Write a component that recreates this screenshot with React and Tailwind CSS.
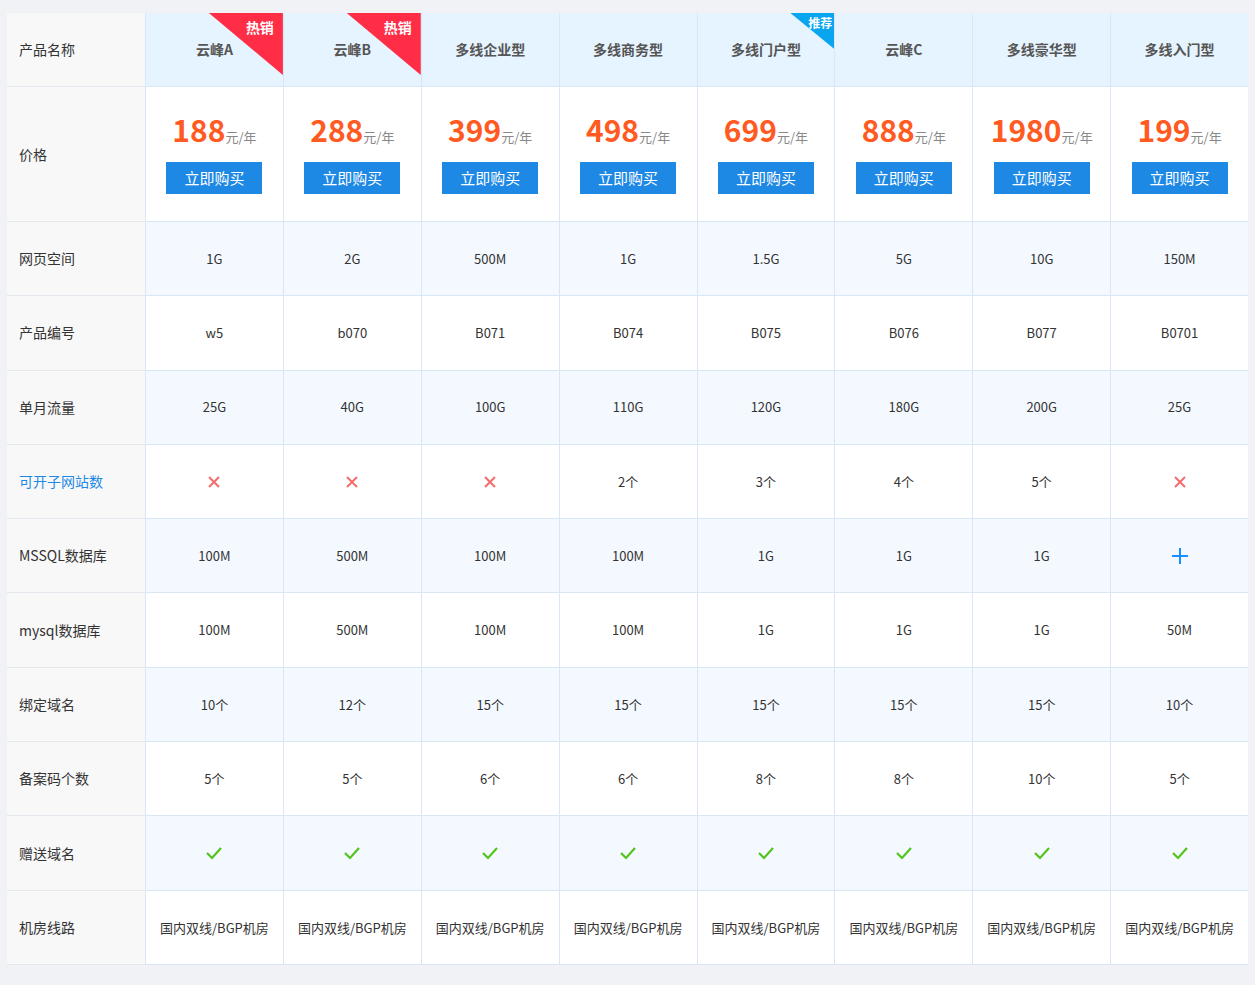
const cols = [
  { name: '云峰A', price: '188', tag: 'hot' },
  { name: '云峰B', price: '288', tag: 'hot' },
  { name: '多线企业型', price: '399' },
  { name: '多线商务型', price: '498' },
  { name: '多线门户型', price: '699', tag: 'rec' },
  { name: '云峰C', price: '888' },
  { name: '多线豪华型', price: '1980' },
  { name: '多线入门型', price: '199' },
];

const X = 'x', V = 'v', P = '+';
const rows = [
  ['网页空间', ['1G', '2G', '500M', '1G', '1.5G', '5G', '10G', '150M']],
  ['产品编号', ['w5', 'b070', 'B071', 'B074', 'B075', 'B076', 'B077', 'B0701']],
  ['单月流量', ['25G', '40G', '100G', '110G', '120G', '180G', '200G', '25G']],
  ['可开子网站数', [X, X, X, '2个', '3个', '4个', '5个', X], true],
  ['MSSQL数据库', ['100M', '500M', '100M', '100M', '1G', '1G', '1G', P]],
  ['mysql数据库', ['100M', '500M', '100M', '100M', '1G', '1G', '1G', '50M']],
  ['绑定域名', ['10个', '12个', '15个', '15个', '15个', '15个', '15个', '10个']],
  ['备案码个数', ['5个', '5个', '6个', '6个', '8个', '8个', '10个', '5个']],
  ['赠送域名', [V, V, V, V, V, V, V, V]],
  ['机房线路', Array(8).fill('国内双线/BGP机房')],
];

function Cell({ v }) {
  if (v === X)
    return (
      <svg width="14" height="14" viewBox="0 0 14 14"><path d="M2 2L12 12M12 2L2 12" stroke="#f56c6c" strokeWidth="2" /></svg>
    );
  if (v === V)
    return (
      <svg width="18" height="14" viewBox="0 0 18 14"><path d="M2 7L7 12L16 2" stroke="#52c41a" strokeWidth="2.2" fill="none" /></svg>
    );
  if (v === P)
    return (
      <svg width="18" height="18" viewBox="0 0 18 18"><path d="M9 1V17M1 9H17" stroke="#1890ff" strokeWidth="2" /></svg>
    );
  return <span className="text-[13px] text-[#333]">{v}</span>;
}

export default function App() {
  return (
    <div className="min-h-[985px] bg-[#f0f2f5] pt-[13px] pl-[7px]" style={{ fontFamily: '"Noto Sans CJK SC", "Noto Sans", sans-serif' }}>
      <div className="grid w-[1241px] grid-cols-[138px_repeat(8,1fr)] bg-white">
        {/* header */}
        <div className="flex h-[74px] items-center border-b border-[#e3e8ef] bg-[#f8f8f8] pl-3 text-[14px] text-[#333]">产品名称</div>
        {cols.map((c) => (
          <div key={c.name} className="relative flex h-[74px] items-center justify-center overflow-hidden border-b border-l border-[#d9e6f5] bg-[#e6f4ff] text-[14px] font-bold text-[#555]">
            {c.name}
            {c.tag === 'hot' && (
              <div className="absolute right-0 top-0 h-[62px] w-[74px] bg-[#ff2d46] [clip-path:polygon(0_0,100%_0,100%_100%)]">
                <span className="absolute right-[9px] top-[4px] text-[14px] font-bold text-white">热销</span>
              </div>
            )}
            {c.tag === 'rec' && (
              <div className="absolute right-0 top-0 h-[36px] w-[44px] bg-[#0aa5ef] [clip-path:polygon(0_0,100%_0,100%_100%)]">
                <span className="absolute right-[2px] top-[1px] text-[12px] font-bold text-white">推荐</span>
              </div>
            )}
          </div>
        ))}
        {/* price */}
        <div className="flex h-[135px] items-center border-b border-[#e3e8ef] bg-[#f8f8f8] pl-3 text-[14px] text-[#333]">价格</div>
        {cols.map((c) => (
          <div key={c.name} className="flex h-[135px] flex-col items-center justify-center border-b border-l border-[#d9e6f5]">
            <div className="flex items-baseline">
              <span className="text-[30px] font-bold leading-none text-[#ff5a1f]">{c.price}</span>
              <span className="text-[13px] text-[#888]">元/年</span>
            </div>
            <button className="mt-[16px] h-[32px] w-[96px] bg-[#1e88e5] text-[15px] text-white">立即购买</button>
          </div>
        ))}
        {rows.map(([label, vals, link], ri) => {
          const bg = ri % 2 === 0 ? 'bg-[#f4f9ff]' : 'bg-white';
          return [
            <div key={label} className={`flex h-[74.3px] items-center border-b border-[#e3e8ef] bg-[#f8f8f8] pl-3 text-[14px] ${link ? 'text-[#1e88e5]' : 'text-[#333]'}`}>{label}</div>,
            ...vals.map((v, i) => (
              <div key={label + i} className={`flex h-[74.3px] items-center justify-center border-b border-l border-[#d9e6f5] ${bg}`}>
                <Cell v={v} />
              </div>
            )),
          ];
        })}
      </div>
    </div>
  );
}
